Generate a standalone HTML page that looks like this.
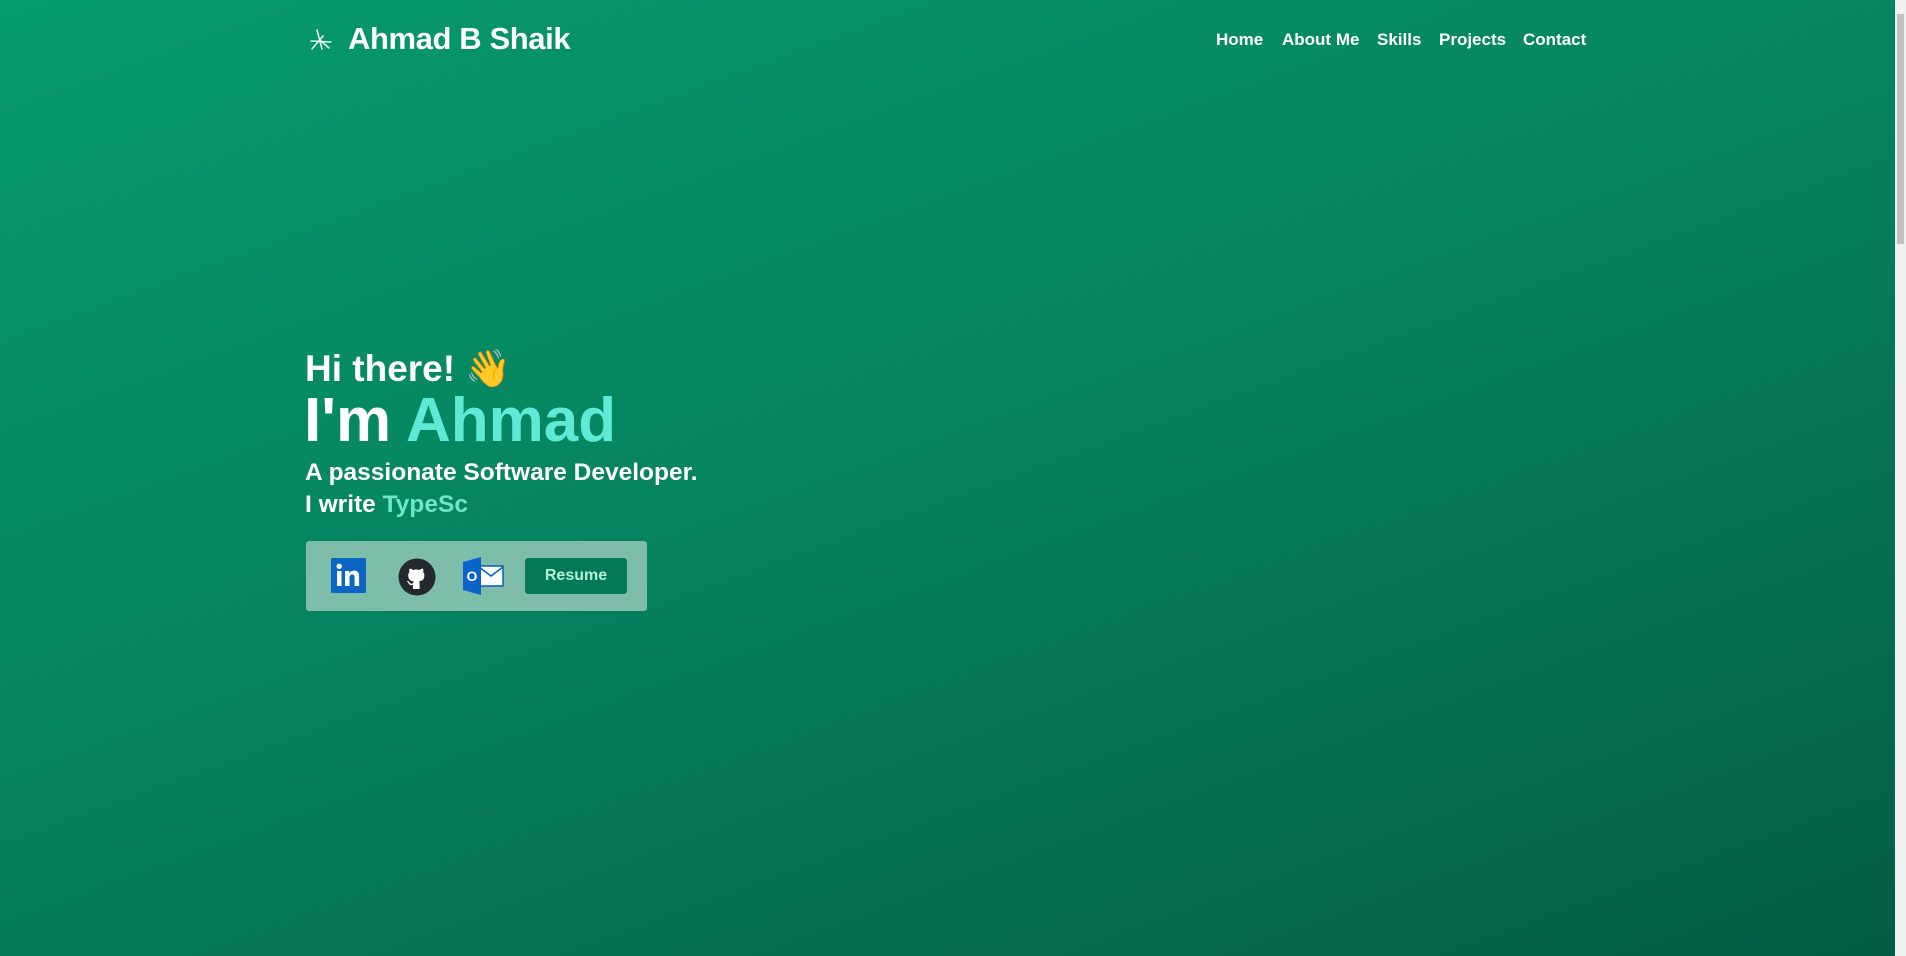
<!DOCTYPE html>
<html><head><meta charset="utf-8"><style>
html,body{margin:0;padding:0;width:1906px;height:956px;overflow:hidden}
body{background:linear-gradient(160deg,#069a6c 0%,#06835f 45%,#055c44 100%);font-family:"Liberation Sans",sans-serif;color:#fff;position:relative}
.t{position:absolute;white-space:nowrap;font-weight:bold}
.nav a{position:absolute;top:30px;font-size:17px;font-weight:bold;color:#fff;text-decoration:none;white-space:nowrap}
.sb{position:absolute;right:0;top:0;width:11px;height:956px;background:#f1f1f1}
.sb div{position:absolute;left:2px;top:14px;width:7px;height:230px;background:#c1c1c1}
</style></head><body>
<svg style="position:absolute;left:309px;top:28px" width="24" height="24" viewBox="0 0 24 24" fill="none" stroke="#e6f5ef" stroke-width="1.6" stroke-linecap="round"><path d="M8 2 L13 21 M3 21 L14 8 M2 13 L22 14 M12 13 L20 20"/></svg>
<div class="t" style="left:348px;top:21px;font-size:31px;letter-spacing:-0.4px">Ahmad B Shaik</div>
<div class="nav">
<a style="left:1216px">Home</a>
<a style="left:1282px">About Me</a>
<a style="left:1377px">Skills</a>
<a style="left:1439px">Projects</a>
<a style="left:1523px">Contact</a>
</div>
<div class="t" style="left:305px;top:348px;font-size:37px">Hi there! <span style="font-family:'Noto Color Emoji',sans-serif;font-weight:normal">👋</span></div>
<div class="t" style="left:304px;top:385px;font-size:62px">I'm <span style="color:#5eead4">Ahmad</span></div>
<div class="t" style="left:305px;top:459px;font-size:24.5px">A passionate Software Developer.</div>
<div class="t" style="left:305px;top:491px;font-size:24.5px">I write <span style="color:#6ee7c7">TypeSc</span></div>
<div style="position:absolute;left:306px;top:541px;width:341px;height:70px;background:#7dbdaa;border-radius:3px"></div>
<svg style="position:absolute;left:331px;top:558px" width="35" height="35" viewBox="0 0 35 35"><rect width="35" height="35" fill="#0a66c2" rx="1"/><rect x="6" y="13" width="4.5" height="15" fill="#fff"/><circle cx="8.2" cy="8.3" r="2.7" fill="#fff"/><path d="M14 13h4.3v2.2c.8-1.5 2.6-2.6 4.8-2.6 4 0 5 2.5 5 6V28h-4.5v-8.2c0-2-.5-3.3-2.300-3.300-2 0-2.800 1.400-2.800 3.400V28H14z" fill="#fff"/></svg>
<svg style="position:absolute;left:398px;top:558px" width="38" height="38" viewBox="0 0 38 38"><circle cx="19" cy="19" r="18.5" fill="#24292f"/><path d="M15 31v-4c-3.5.7-4.3-1.5-4.3-1.5-.6-1.4-1.4-1.8-1.4-1.8-1.1-.8.1-.8.1-.8 1.3.1 2 1.3 2 1.3 1.1 1.9 3 1.4 3.7 1 .1-.8.4-1.4.8-1.7-2.8-.3-5.7-1.400-5.7-6.200 0-1.400.5-2.500 1.300-3.300-.1-.3-.6-1.600.1-3.300 0 0 1.100-.3 3.500 1.300a12 12 0 0 1 6.400 0c2.400-1.600 3.500-1.300 3.500-1.300.7 1.700.2 3 .1 3.300.8.800 1.300 1.900 1.300 3.300 0 4.800-2.900 5.900-5.700 6.200.5.400.9 1.100.9 2.300V31z" fill="#fff"/></svg>
<svg style="position:absolute;left:463px;top:557px" width="41" height="38" viewBox="0 0 41 38"><rect x="16" y="9" width="24" height="20" fill="#fff" stroke="#0a5bbd" stroke-width="1.5"/><path d="M16 10l12 9 12-9" fill="none" stroke="#0a5bbd" stroke-width="1.5"/><path d="M0 5 L18 0 V38 L0 33z" fill="#0a64c8"/><text x="9" y="24" font-family="Liberation Sans" font-weight="bold" font-size="14" fill="#fff" text-anchor="middle">O</text></svg>
<div style="position:absolute;left:525px;top:558px;width:102px;height:36px;background:#047857;border-radius:3px;color:#b4f1d9;font-size:16px;font-weight:bold;text-align:center;line-height:36px">Resume</div>
<div class="sb"><div></div></div>
</body></html>
